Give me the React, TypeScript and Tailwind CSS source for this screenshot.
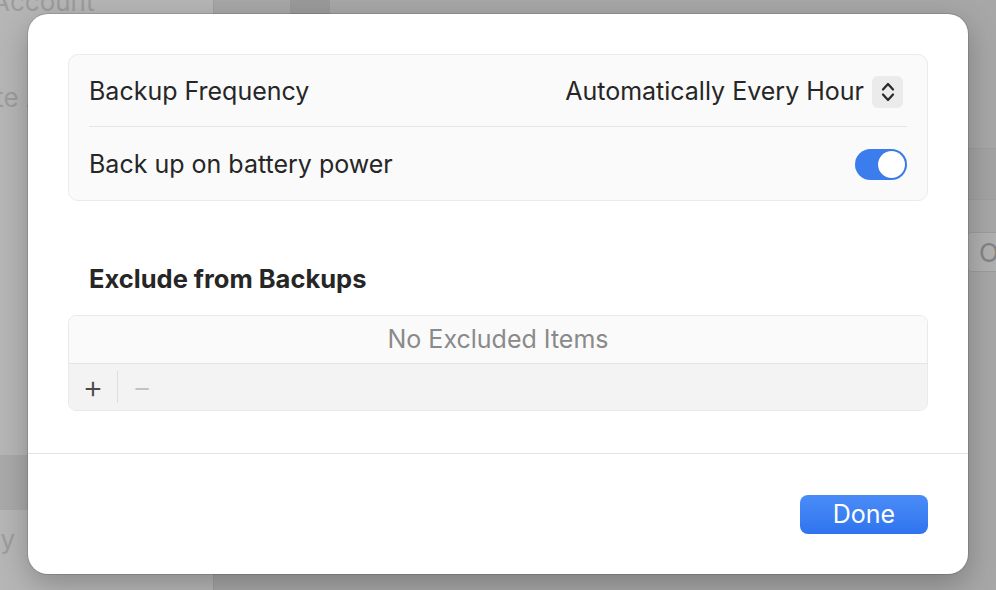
const font = { fontFamily: 'Inter, "Noto Sans", sans-serif' };

const Stepper = () => (
  <div className="ml-[8px] flex h-[32px] w-[31px] items-center justify-center rounded-[6px] bg-[#ebebeb]">
    <svg width="14" height="22" viewBox="0 0 14 22" fill="none" stroke="#2a2a2a" strokeWidth="2.3" strokeLinecap="round" strokeLinejoin="round">
      <path d="M2 8.5 L7 3 L12 8.5" />
      <path d="M2 13.5 L7 19 L12 13.5" />
    </svg>
  </div>
);

const Toggle = () => (
  <div className="flex h-[31px] w-[52px] items-center justify-end rounded-full bg-[#3b7ded] p-[2px]">
    <div className="h-[27px] w-[27px] rounded-full bg-white shadow-[0_0_1px_rgba(0,0,0,0.3)]" />
  </div>
);

export default function App() {
  return (
    <div className="relative flex h-[590px] w-[996px] overflow-hidden bg-[#a7a7a7]" style={font}>
      {/* Dimmed window behind the sheet */}
      <aside className="flex w-[214px] flex-col border-r border-[#a0a0a0] bg-[#b6b6b6] text-[26px] text-[#9c9c9c]">
        <div className="-ml-[8px] -mt-[14px] leading-[32px]">Account</div>
        <div className="-ml-[63px] mt-[64px] whitespace-nowrap leading-[32px]">Create Account</div>
        <div className="mt-[341px] h-[55px] bg-[#a9a9a9]" />
        <div className="-ml-[76px] mt-[14px] leading-[32px]">Privacy</div>
      </aside>
      <main className="flex flex-1 flex-col">
        <div className="ml-[76px] h-[14px] w-[40px] bg-[#9a9a9a]" />
        <div className="mt-[134px] h-[52px] border-y border-[#9f9f9f] bg-[#a3a3a3]" />
        <div className="mt-[32px] flex justify-end">
          <div className="mr-[-30px] flex h-[40px] w-[60px] items-center rounded-[6px] border border-[#9c9c9c] bg-[#b0b0b0] pl-[12px] text-[26px] text-[#838383]">
            O
          </div>
        </div>
      </main>

      {/* Sheet */}
      <div className="absolute left-[28px] top-[14px] flex h-[560px] w-[940px] flex-col rounded-[20px] bg-white shadow-[0_0_0_1px_rgba(0,0,0,0.12),0_10px_30px_rgba(0,0,0,0.25)]">
        <div className="px-[40px] pt-[40px]">
          <div className="rounded-[10px] border border-[#ebebeb] bg-[#fafafa] px-[20px]">
            <div className="flex h-[72px] items-center border-b border-[#e6e6e6] pt-[2px] text-[25px] text-[#262626]">
              <span>Backup Frequency</span>
              <div className="ml-auto flex items-center">
                <span>Automatically Every Hour</span>
                <Stepper />
                <span className="w-[4px]" />
              </div>
            </div>
            <div className="flex h-[73px] items-center pt-[2px] text-[25px] text-[#262626]">
              <span>Back up on battery power</span>
              <div className="ml-auto">
                <Toggle />
              </div>
            </div>
          </div>

          <h2 className="ml-[21px] mt-[63px] text-[25.5px] font-bold leading-[30px] text-[#262626]">
            Exclude from Backups
          </h2>

          <div className="mt-[21px] overflow-hidden rounded-[8px] border border-[#e9e9e9]">
            <div className="flex h-[48px] items-center justify-center border-b border-[#e4e4e4] bg-[#fafafa] text-[25px] text-[#8a8a8a]">
              No Excluded Items
            </div>
            <div className="flex h-[46px] items-center bg-[#f3f3f3]">
              <span className="flex w-[48px] items-center justify-center text-[32px] font-light leading-none text-[#4a4a4a]">+</span>
              <span className="h-[32px] w-px bg-[#dedede]" />
              <span className="flex w-[48px] items-center justify-center text-[30px] font-light leading-none text-[#c2c2c2]">−</span>
            </div>
          </div>
        </div>

        <div className="mt-[42px] border-t border-[#e3e3e3]" />

        <div className="flex flex-1 items-center justify-end px-[40px]">
          <button className="h-[39px] w-[128px] rounded-[8px] bg-gradient-to-b from-[#4a8cf7] to-[#2f74ee] text-[25px] leading-none text-white">
            Done
          </button>
        </div>
      </div>
    </div>
  );
}
